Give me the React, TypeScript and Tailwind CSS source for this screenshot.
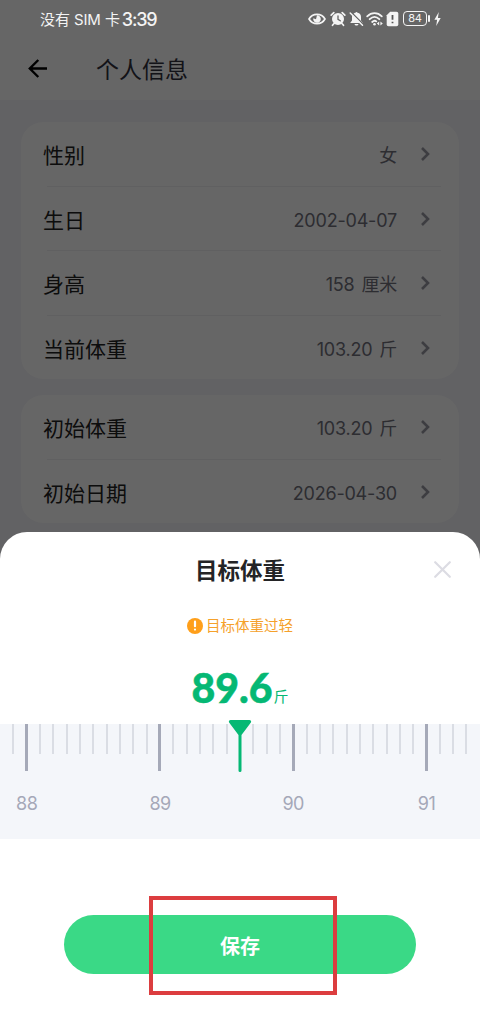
import React from 'react';

interface InfoRow {
    label: string;
    value: string;
}

const profileRows: InfoRow[] = [
    { label: '性别', value: '女' },
    { label: '生日', value: '2002-04-07' },
    { label: '身高', value: '158 厘米' },
    { label: '当前体重', value: '103.20 斤' },
];

const startRows: InfoRow[] = [
    { label: '初始体重', value: '103.20 斤' },
    { label: '初始日期', value: '2026-04-30' },
];

// Ruler runs from 87.9 to 91.3 in steps of 0.1
const ticks = Array.from({ length: 35 }, (_, i) => 879 + i);

const StatusBar: React.FC = () => (
    <div className="relative z-20 h-[37px] flex items-center justify-between pl-[40px] pr-[39px] text-[#f4f4f4]">
        <div className="flex items-center whitespace-nowrap leading-none">
            <span className="mt-px text-[15px] tracking-[-0.1px] font-['Inter','Noto_Sans_CJK_SC',sans-serif]">没有 SIM 卡</span>
            <span className="ml-[2px] mt-[2px] text-[18px] tracking-[-1.2px] font-['Inter'] font-medium">3:39</span>
        </div>
        <div className="flex items-center">
            <svg width="18" height="14" viewBox="0 0 18 14" fill="none" stroke="currentColor">
                <path d="M1 7C4.5 .8 13.5 .8 17 7C13.5 13.2 4.5 13.2 1 7Z" strokeWidth="1.6" />
                <path d="M9 3.2A3.8 3.8 0 1 1 5.3 6.2L8 7.2Z" fill="currentColor" stroke="none" />
            </svg>
            <svg className="ml-[4px]" width="16" height="16" viewBox="0 0 16 16" fill="none" stroke="currentColor" strokeLinecap="round">
                <circle cx="8" cy="8" r="6" fill="currentColor" stroke="none" />
                <path d="M1.2 4.2L3.8 1.7M14.8 4.2L12.2 1.7M3.8 12.8L2.5 14.3M12.2 12.8L13.5 14.3" strokeWidth="1.7" />
                <path d="M8 4.8V8.3L10.3 9.8" stroke="#666" strokeWidth="1.3" />
            </svg>
            <svg className="ml-[3px]" width="15" height="16" viewBox="0 0 15 16">
                <path d="M4 3.2C5 2 6.2 1.9 6.5 1.8C6.7 .8 8.3 .8 8.5 1.8C11 2.3 12 4 12 6V9.5L13.8 12H1.2L3 9.5V6C3 5 3.3 4 4 3.2ZM5.5 13H9.5C9 15 6 15 5.5 13Z" fill="currentColor" />
                <path d="M2.2 1.2L14.2 13.2" stroke="#666" strokeWidth="1.6" />
                <path d="M1.2 2L13.5 14.3" stroke="currentColor" strokeWidth="1.5" strokeLinecap="round" />
            </svg>
            <svg className="ml-[2px]" width="18" height="16" viewBox="0 0 18 16" fill="none" stroke="currentColor" strokeWidth="1.8" strokeLinecap="round">
                <path d="M1.2 5.3C5.5 1 11.5 1 15.8 5.3M3.7 8.2C6.8 5.2 10.2 5.2 13.3 8.2M6.2 11C7.8 9.5 9.2 9.5 10.2 10.4" />
                <circle cx="8.5" cy="13.2" r="1.3" fill="currentColor" stroke="none" />
                <path d="M13.2 10.5L10.8 12.5L13.2 14.5ZM14.4 10.5L16.8 12.5L14.4 14.5Z" fill="currentColor" stroke="none" />
            </svg>
            <svg className="ml-[2px]" width="13" height="16" viewBox="0 0 13 16">
                <path d="M4.2 .8H10.5Q12.3 .8 12.3 2.6V13.4Q12.3 15.2 10.5 15.2H2.5Q.7 15.2 .7 13.4V4.3Z" fill="currentColor" />
                <path d="M6.5 4V8.8M6.5 10.8V12.3" stroke="#555" strokeWidth="1.8" />
            </svg>
            <div className="ml-[4px] w-[24px] h-[15px] flex items-center justify-center rounded-[4px] border-[1.5px] border-current text-[11px] leading-none tracking-[-0.3px] font-['Inter']">84</div>
            <div className="ml-[1px] w-[2px] h-[7px] rounded-sm bg-current" />
            <svg className="ml-[4px]" width="7" height="14" viewBox="0 0 7 14">
                <path d="M4.8 0L.4 7.7H3.1L2.2 14L6.7 5.9H3.9Z" fill="currentColor" />
            </svg>
        </div>
    </div>
);

const InfoCard: React.FC<{ rows: InfoRow[] }> = ({ rows }) => (
    <div className="rounded-[22px] bg-white">
        {rows.map((row, i) => (
            <div key={row.label}>
                {i > 0 && <div className="h-px ml-[26px] mr-[18px] bg-[#f0f0f3]" />}
                <div className="h-[63.5px] flex items-center pl-[22px] pr-[29px]">
                    <span className="mt-[2px] text-[21px] leading-none text-[#222]">{row.label}</span>
                    <span className="ml-auto mt-[5px] text-[18px] leading-none tracking-[-0.2px] [word-spacing:2px] text-[#70707c] font-['Inter','Noto_Sans_CJK_SC',sans-serif]">{row.value}</span>
                    <svg className="ml-[24px] mt-px" width="9" height="14" viewBox="0 0 9 14" fill="none" stroke="#9898a2" strokeWidth="2.6">
                        <path d="M1 1L7 7L1 13" />
                    </svg>
                </div>
            </div>
        ))}
    </div>
);

const WeightRuler: React.FC = () => (
    <div className="relative mt-[12px] h-[115px] bg-[#f4f6fa]">
        <div className="flex px-[6.67px]">
            {ticks.map((tick) => {
                const major = tick % 10 === 0;
                return (
                    <div key={tick} className="flex-1 min-w-0 flex flex-col items-center">
                        <div className={major ? 'w-[3px] h-[47px] bg-[#a5a9b8]' : 'w-[2px] h-[30px] bg-[#dadde4]'} />
                        {major && (
                            <span className="mt-[24px] text-[18px] leading-none text-[#a5a8b8] whitespace-nowrap tracking-[-0.6px] font-['Inter']">{tick / 10}</span>
                        )}
                    </div>
                );
            })}
        </div>
        {/* Pointer */}
        <svg className="absolute left-1/2 -top-[4px] -translate-x-1/2" width="24" height="53" viewBox="0 0 24 53" fill="#05b874">
            <path d="M2.5 0H21.5Q24 .5 22.7 2.8L13.5 15V50.5Q13.5 52 12 52Q10.5 52 10.5 50.5V15L1.3 2.8Q0 .5 2.5 0Z" />
        </svg>
    </div>
);

const TargetWeightSheet: React.FC = () => (
    <div className="absolute inset-x-0 bottom-0 z-20 h-[495px] rounded-t-[27px] bg-white">
        <div className="relative h-[78px] flex items-center justify-center">
            <h2 className="text-[22.5px] leading-none font-bold text-[#242426]">目标体重</h2>
            <svg className="absolute right-[29px] top-[29px]" width="17" height="17" viewBox="0 0 17 17" stroke="#dcdce3" strokeWidth="2.2" strokeLinecap="round">
                <path d="M1.2 1.2L15.8 15.8M15.8 1.2L1.2 15.8" />
            </svg>
        </div>
        <div className="h-[35px] pb-[3px] flex items-center justify-center gap-[3px] text-[#f5a12b]">
            <svg width="16" height="16" viewBox="0 0 16 16">
                <circle cx="8" cy="8" r="8" fill="#ff9f1a" />
                <path d="M8 3.7V8.2M8 11.5V11.6" stroke="white" strokeWidth="2.2" strokeLinecap="round" />
            </svg>
            <span className="mt-px text-[14.5px] leading-none">目标体重过轻</span>
        </div>
        <div className="h-[67px] flex items-baseline justify-center pt-[22px] text-[#05b874]">
            <span className="text-[41px] leading-none font-black font-['Lato'] [-webkit-text-stroke:0.5px_#05b874]">89.6</span>
            <span className="ml-px -translate-y-px text-[15px] leading-none">斤</span>
        </div>
        <WeightRuler />
        <div className="flex justify-center mt-[76px]">
            <button className="w-[352px] h-[59px] pt-[2px] rounded-full bg-[#3ad986] text-white text-[20px] font-bold leading-none">
                保存
            </button>
        </div>
        {/* Highlight around the save button */}
        <div className="absolute left-[149px] bottom-[32px] w-[188px] h-[99px] border-[4px] border-[#dc3d3f]" />
    </div>
);

export default function App() {
    return (
        <div className="relative w-[480px] h-[1027px] overflow-hidden bg-[#f4f4f9] font-['Lato','Noto_Sans_CJK_SC',sans-serif]">
            <div className="h-[100px] bg-white">
                <StatusBar />
                <div className="h-[63px] flex items-center pl-[28px]">
                    <svg width="20" height="19" viewBox="0 0 20 19" fill="none" stroke="black" strokeWidth="2.4">
                        <path d="M10.3 1L1.8 9.5L10.3 18M1.8 9.5H19" />
                    </svg>
                    <h1 className="ml-[48px] mt-[2px] text-[23px] leading-none text-[#30303c]">个人信息</h1>
                </div>
            </div>
            <div className="px-[21px] pt-[22px] flex flex-col gap-[16px]">
                <InfoCard rows={profileRows} />
                <InfoCard rows={startRows} />
            </div>
            {/* Backdrop */}
            <div className="absolute inset-0 z-10 bg-black/60" />
            <TargetWeightSheet />
        </div>
    );
}
